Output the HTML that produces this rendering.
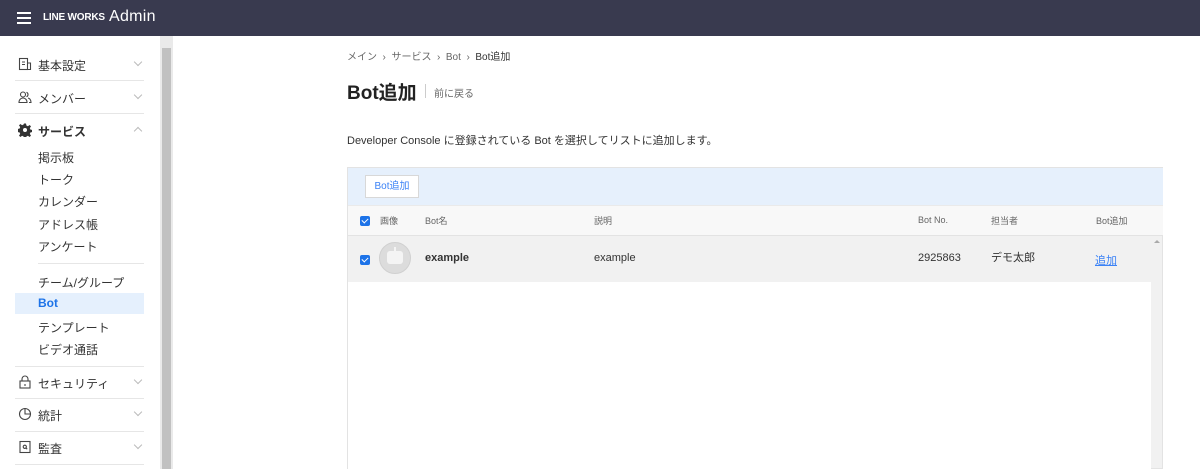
<!DOCTYPE html>
<html><head><meta charset="utf-8"><style>
*{margin:0;padding:0;box-sizing:border-box}
body{width:1200px;height:469px;overflow:hidden;background:#fff;font-family:"Liberation Sans","Noto Sans CJK JP",sans-serif;color:#222;position:relative;font-size:12px}
.top{position:absolute;left:0;top:0;width:1200px;height:36px;background:#393a4f}
.abs{position:absolute;white-space:nowrap}
.sb{position:absolute;left:160px;top:36px;width:13px;height:433px;background:#eaeaea}
.sb div{position:absolute;left:2px;top:12px;width:9px;height:421px;background:#c1c1c1}
.div{position:absolute;left:15px;width:129px;height:1px;background:#e6e6e6}
.m{position:absolute;left:38px;font-size:12px;color:#333}
.s{position:absolute;left:38px;font-size:12px;color:#333}
.chev{position:absolute;left:135px;width:6px;height:6px;border-right:1px solid #bbb;border-bottom:1px solid #bbb;transform:rotate(45deg)}
.chevu{transform:rotate(-135deg)}
.ic{position:absolute;left:18px;width:14px;height:14px}
.cb{position:absolute;width:10px;height:10px;background:#1d73e8;border-radius:2px}
.cb:after{content:"";position:absolute;left:3px;top:1px;width:3px;height:5px;border-right:1.5px solid #fff;border-bottom:1.5px solid #fff;transform:rotate(45deg)}
</style></head><body>
<div class="top">
 <div class="abs" style="left:17px;top:12px;width:14px;height:2px;background:#fff"></div>
 <div class="abs" style="left:17px;top:17px;width:14px;height:2px;background:#fff"></div>
 <div class="abs" style="left:17px;top:22px;width:14px;height:2px;background:#fff"></div>
 <div class="abs" style="left:43px;top:12px;color:#fff;font-weight:bold;font-size:10px;letter-spacing:-0.2px">LINE WORKS</div>
 <div class="abs" style="left:109px;top:8px;color:#fff;font-size:16px;letter-spacing:0.3px">Admin</div>
</div>
<svg class="ic" style="top:57px" viewBox="0 0 14 14" fill="none" stroke="#444" stroke-width="1.1"><rect x="1.5" y="1.5" width="8" height="11"/><path d="M9.5 6h3v6.5h-3M4 5h3M4 7.5h3"/></svg>
<div class="m" style="top:57px">基本設定</div><div class="chev" style="top:59px"></div>
<div class="div" style="top:80px"></div>
<svg class="ic" style="top:90px" viewBox="0 0 14 14" fill="none" stroke="#444" stroke-width="1.1"><circle cx="5" cy="4.5" r="2.5"/><path d="M1 12.5c0-3 2-4.5 4-4.5s4 1.5 4 4.5zM8.5 2.2a2.5 2.5 0 010 4.6M10 8c2 .5 3 2 3 4.5h-2"/></svg>
<div class="m" style="top:90px">メンバー</div><div class="chev" style="top:92px"></div>
<div class="div" style="top:113px"></div>
<svg class="ic" style="top:123px" viewBox="0 0 14 14"><path fill="#333" d="M6 0.5h2l.4 2 1.5.7 1.7-1.2 1.4 1.4-1.2 1.7.7 1.5 2 .4v2l-2 .4-.7 1.5 1.2 1.7-1.4 1.4-1.700-1.2-1.5.7-.4 2H6l-.4-2-1.5-.7-1.7 1.2-1.4-1.4 1.2-1.7-.7-1.5-2-.4V6l2-.4.7-1.5L1 2.4 2.4 1l1.7 1.2 1.5-.7z"/><circle cx="7" cy="7" r="2" fill="#fff"/></svg>
<div class="m" style="top:123px;font-weight:bold">サービス</div><div class="chev chevu" style="top:128px"></div>
<div class="s" style="top:149px">掲示板</div>
<div class="s" style="top:171px">トーク</div>
<div class="s" style="top:193px">カレンダー</div>
<div class="s" style="top:216px">アドレス帳</div>
<div class="s" style="top:238px">アンケート</div>
<div class="div" style="top:263px;left:38px;width:106px"></div>
<div class="s" style="top:274px">チーム/グループ</div>
<div class="abs" style="left:15px;top:293px;width:129px;height:21px;background:#e5f0fd"></div>
<div class="s" style="top:296px;color:#1d73e8;font-weight:bold">Bot</div>
<div class="s" style="top:319px">テンプレート</div>
<div class="s" style="top:341px">ビデオ通話</div>
<div class="div" style="top:366px"></div>
<svg class="ic" style="top:375px" viewBox="0 0 14 14" fill="none" stroke="#444" stroke-width="1.1"><rect x="2" y="6" width="10" height="7"/><path d="M4 6V4a3 3 0 016 0v2M7 9v2"/></svg>
<div class="m" style="top:375px">セキュリティ</div><div class="chev" style="top:377px"></div>
<div class="div" style="top:398px"></div>
<svg class="ic" style="top:407px" viewBox="0 0 14 14" fill="none" stroke="#444" stroke-width="1.1"><circle cx="7" cy="7" r="5.5"/><path d="M7 1.5V7h5.5"/></svg>
<div class="m" style="top:407px">統計</div><div class="chev" style="top:409px"></div>
<div class="div" style="top:431px"></div>
<svg class="ic" style="top:440px" viewBox="0 0 14 14" fill="none" stroke="#444" stroke-width="1.1"><rect x="2" y="1.5" width="10" height="11"/><circle cx="6.8" cy="6.8" r="1.6"/><path d="M8 8l1.2 1.2"/></svg>
<div class="m" style="top:440px">監査</div><div class="chev" style="top:442px"></div>
<div class="div" style="top:464px"></div>
<div class="sb"><div></div></div>

<div class="abs" style="left:347px;top:48px;font-size:10px;color:#666">メイン &nbsp;›&nbsp; サービス &nbsp;›&nbsp; Bot &nbsp;›&nbsp; <span style="color:#333">Bot追加</span></div>
<div class="abs" style="left:347px;top:78px;font-size:19px;font-weight:bold;color:#222">Bot追加</div>
<div class="abs" style="left:425px;top:84px;width:1px;height:14px;background:#ccc"></div>
<div class="abs" style="left:434px;top:85px;font-size:10px;color:#666">前に戻る</div>
<div class="abs" style="left:347px;top:132px;font-size:11px;color:#333">Developer Console に登録されている Bot を選択してリストに追加します。</div>

<div class="abs" style="left:347px;top:167px;width:816px;height:302px;background:#f1f1f1;border:1px solid #e3e3e3"></div>
<div class="abs" style="left:348px;top:168px;width:815px;height:37px;background:#e6f0fc"></div>
<div class="abs" style="left:365px;top:175px;width:54px;height:23px;background:#fff;border:1px solid #d8d8d8;color:#3b82f6;font-size:10px;text-align:center;line-height:21px">Bot追加</div>
<div class="abs" style="left:348px;top:205px;width:815px;height:31px;background:#f8f8f8;border-top:1px solid #eaeaea;border-bottom:1px solid #e3e3e3"></div>
<div class="cb" style="left:360px;top:216px"></div>
<div class="abs" style="left:380px;top:214px;font-size:9px;color:#666">画像</div>
<div class="abs" style="left:425px;top:214px;font-size:9px;color:#666">Bot名</div>
<div class="abs" style="left:594px;top:214px;font-size:9px;color:#666">説明</div>
<div class="abs" style="left:918px;top:215px;font-size:9px;color:#666">Bot No.</div>
<div class="abs" style="left:991px;top:214px;font-size:9px;color:#666">担当者</div>
<div class="abs" style="left:1096px;top:214px;font-size:9px;color:#666">Bot追加</div>
<div class="cb" style="left:360px;top:255px"></div>
<div class="abs" style="left:379px;top:242px;width:32px;height:32px;border-radius:50%;background:#dcdcdc;border:1px solid #d0d0d0"></div>
<div class="abs" style="left:387px;top:251px;width:16px;height:13px;border-radius:3px;background:#f4f4f4"></div>
<div class="abs" style="left:394px;top:247px;width:2px;height:4px;background:#f4f4f4"></div>
<div class="abs" style="left:425px;top:252px;font-size:11px;font-weight:bold;color:#333">example</div>
<div class="abs" style="left:594px;top:252px;font-size:11px;color:#333">example</div>
<div class="abs" style="left:918px;top:252px;font-size:11px;color:#333">2925863</div>
<div class="abs" style="left:991px;top:249px;font-size:11px;color:#333">デモ太郎</div>
<div class="abs" style="left:1095px;top:252px;font-size:11px;color:#3b82f6;text-decoration:underline">追加</div>
<div class="abs" style="left:1154px;top:240px;width:0;height:0;border-left:3px solid transparent;border-right:3px solid transparent;border-bottom:3px solid #aaa"></div>
<div class="abs" style="left:348px;top:282px;width:803px;height:187px;background:#fff"></div>
</body></html>
